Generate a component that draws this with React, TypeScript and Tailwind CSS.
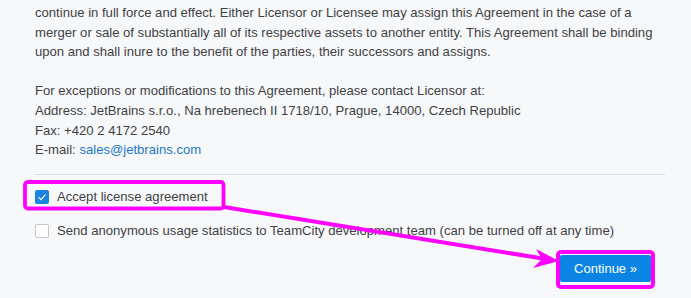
import React from 'react';

const App: React.FC = () => {
  return (
    <div
      className="relative w-[691px] h-[298px] overflow-hidden bg-[#f7f8fa] text-[13.1px] text-[#3f4145]"
      style={{ fontFamily: '"Liberation Sans", Arial, sans-serif' }}
    >
      <div className="w-[665px] pl-[35px] pt-[3px]">
        <p className="leading-[19.6px]">
          continue in full force and effect. Either Licensor or Licensee may assign this Agreement in the case of a
          merger or sale of substantially all of its respective assets to another entity. This Agreement shall be binding
          upon and shall inure to the benefit of the parties, their successors and assigns.
        </p>
        <p className="mt-[19.6px] leading-[19.6px]">
          For exceptions or modifications to this Agreement, please contact Licensor at:
          <br />
          Address: JetBrains s.r.o., Na hrebenech II 1718/10, Prague, 14000, Czech Republic
          <br />
          Fax: +420 2 4172 2540
          <br />
          E-mail: <a className="text-[#1a78cf]">sales@jetbrains.com</a>
        </p>

        <div className="mt-[14px] border-t border-[#dcdfe3]" />

        {/* Options */}
        <div className="mt-[12px] flex h-[20px] items-center gap-[8px]">
          <span className="flex h-[14px] w-[14px] items-center justify-center rounded-[2px] bg-[#1984e2]">
            <svg width="10" height="10" viewBox="0 0 10 10" fill="none">
              <path d="M1.5 5.2 L4 7.6 L8.6 2.4" stroke="#fff" strokeWidth="1.1" />
            </svg>
          </span>
          <span>Accept license agreement</span>
        </div>
        <div className="mt-[14px] flex h-[20px] items-center gap-[8px]">
          <span className="h-[14px] w-[14px] rounded-[2px] border border-[#c3c8ce] bg-white" />
          <span>Send anonymous usage statistics to TeamCity development team (can be turned off at any time)</span>
        </div>

        <div className="mt-[14px] mr-[14px] flex justify-end">
          <button className="h-[27px] w-[91px] rounded-[2px] bg-[#0a85e6] text-[13px] text-white">
            Continue »
          </button>
        </div>
      </div>

      {/* Annotation overlay */}
      <svg className="pointer-events-none absolute left-0 top-0" width="691" height="298">
        <rect x="25" y="182" width="198.5" height="26.5" rx="3" fill="none" stroke="#ff00ff" strokeWidth="3.8" />
        <rect x="558" y="252" width="95" height="35" rx="3" fill="none" stroke="#ff00ff" strokeWidth="4" />
        <line x1="224" y1="207" x2="546" y2="259" stroke="#ff00ff" strokeWidth="4" />
        <polygon points="559,261 536,249 542,259 533,268" fill="#ff00ff" />
      </svg>
    </div>
  );
};

export default App;
